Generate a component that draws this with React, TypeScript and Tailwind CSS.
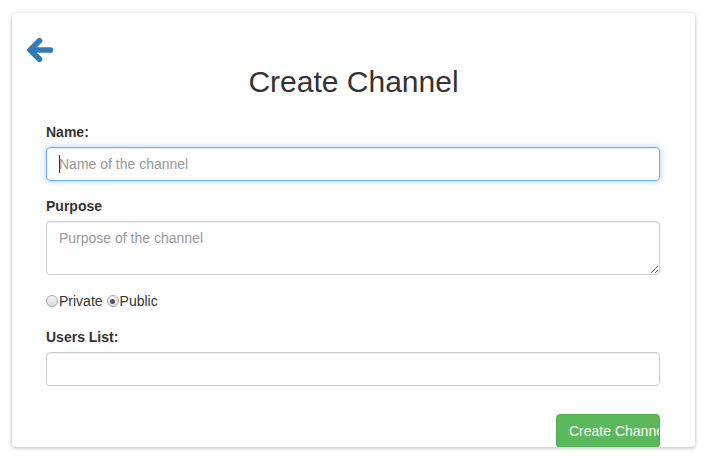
import React from 'react';

const BackArrow: React.FC = () => (
  <svg width="28" height="28" viewBox="0 0 27 27" className="text-[#337ab7]">
    <path d="M6 13.5 H23.5" stroke="currentColor" strokeWidth="5.5" strokeLinecap="round" fill="none" />
    <path d="M13 4.5 L4 13.5 L13 22.5" stroke="currentColor" strokeWidth="5.5" strokeLinecap="round" strokeLinejoin="round" fill="none" />
  </svg>
);

const Radio: React.FC<{ checked?: boolean }> = ({ checked }) => (
  <span className="flex h-[12px] w-[12px] items-center justify-center rounded-full border border-[#a9a9a9] bg-gradient-to-b from-[#f4f4f4] to-[#dcdcdc]">
    {checked && <span className="h-[5px] w-[5px] rounded-full bg-[#555]" />}
  </span>
);

export default function App() {
  return (
    <div className="min-h-screen bg-white pt-[13px] px-[12px] font-['Liberation_Sans',Arial,sans-serif] text-[14px] text-[#333]">
      <div className="relative h-[434px] w-[683px] overflow-hidden rounded-[4px] bg-white shadow-[0_1px_4px_rgba(0,0,0,0.28)]">
        {/* Back */}
        <div className="pl-[14px] pt-[23px]">
          <BackArrow />
        </div>

        <h2 className="mt-[1px] text-center text-[30px] leading-[33px] font-normal">Create Channel</h2>

        <form className="pl-[34px] pr-[35px] pt-[24px]">
          {/* Name */}
          <label className="block font-bold leading-[20px]">Name:</label>
          <div className="relative mt-[5px]">
            <input
              type="text"
              placeholder="Name of the channel"
              className="block h-[34px] w-full rounded-[4px] border border-[#66afe9] px-[12px] text-[14px] outline-none shadow-[inset_0_1px_1px_rgba(0,0,0,0.075),0_0_6px_rgba(102,175,233,0.6)] placeholder:text-[#999]"
            />
            <span className="absolute left-[13px] top-[8px] h-[18px] w-px bg-[#333]" />
          </div>

          {/* Purpose */}
          <label className="mt-[15px] block font-bold leading-[20px]">Purpose</label>
          <textarea
            placeholder="Purpose of the channel"
            className="mt-[5px] block h-[54px] w-full rounded-[4px] border border-[#ccc] px-[12px] py-[6px] text-[14px] leading-[20px] outline-none shadow-[inset_0_1px_1px_rgba(0,0,0,0.075)] placeholder:text-[#999]"
          />

          {/* Type */}
          <div className="mt-[15px] flex h-[22px] items-center leading-[20px]">
            <Radio />
            <span className="ml-px">Private</span>
            <span className="ml-[4px]">
              <Radio checked />
            </span>
            <span className="ml-px">Public</span>
          </div>

          {/* Users */}
          <label className="mt-[15px] block font-bold leading-[20px]">Users List:</label>
          <input
            type="text"
            className="mt-[5px] block h-[34px] w-full rounded-[4px] border border-[#ccc] px-[12px] text-[14px] outline-none shadow-[inset_0_1px_1px_rgba(0,0,0,0.075)]"
          />

          <div className="mt-[28px] flex justify-end">
            <button
              type="button"
              className="h-[34px] w-[104px] overflow-hidden whitespace-nowrap rounded-[4px] border border-[#4cae4c] bg-[#5cb85c] pl-[12px] text-left text-[14px] text-white"
            >
              Create Channel
            </button>
          </div>
        </form>
      </div>
    </div>
  );
}
